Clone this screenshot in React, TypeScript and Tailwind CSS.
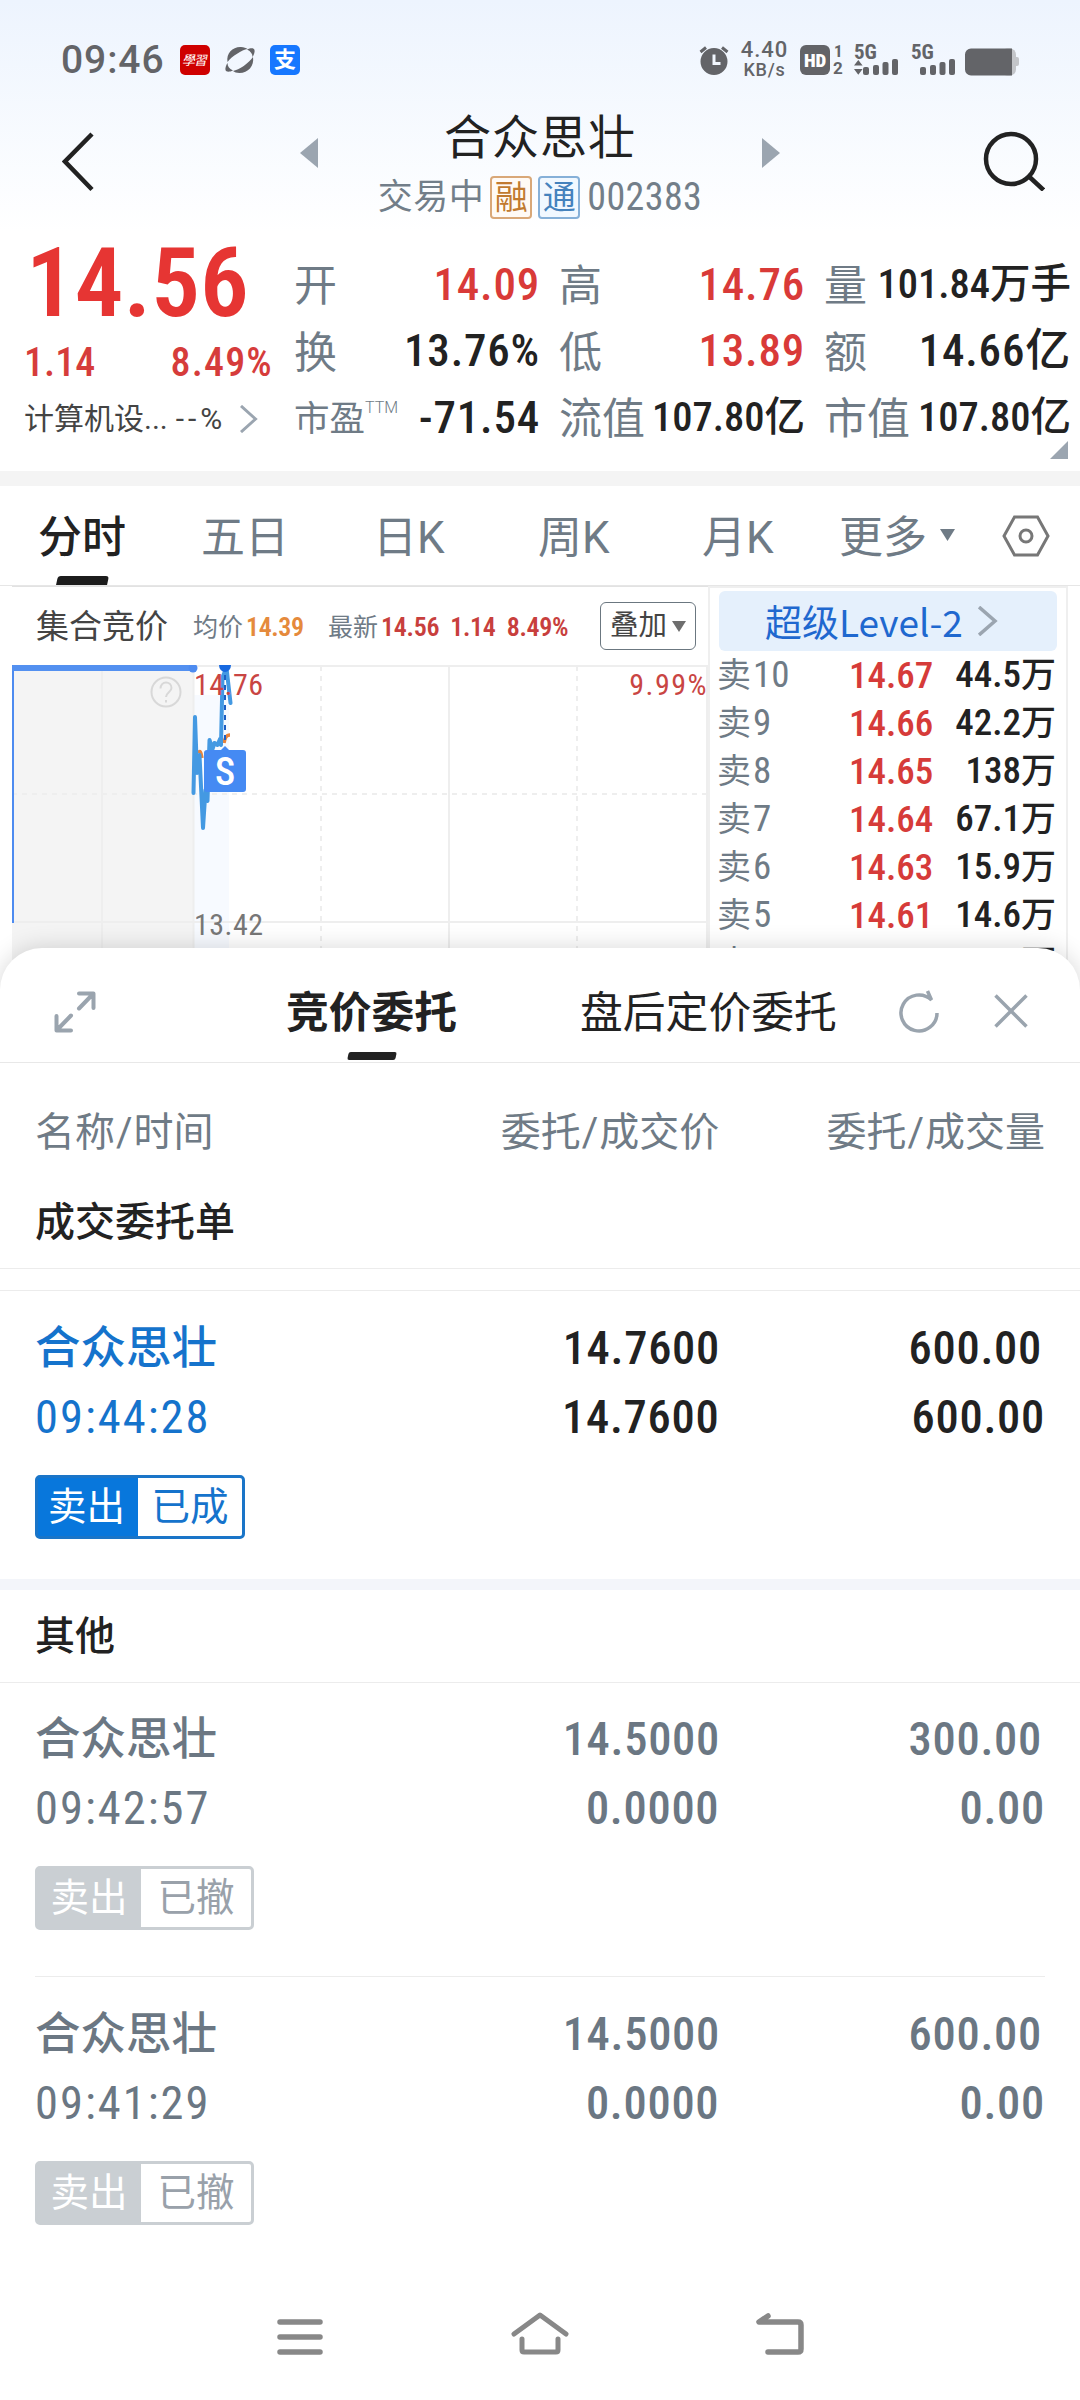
import React from 'react';

interface Quote {
  label: string;
  sup?: string;
  value: string;
  tone: 'up' | 'flat';
  small?: boolean;
}

interface Level {
  name: string;
  price: string;
  volume: string;
}

interface Order {
  name: string;
  time: string;
  price: string;
  dealPrice: string;
  amount: string;
  dealAmount: string;
  status: string;
  done?: boolean;
}

const QUOTE_COLUMNS: Quote[][] = [
  [
    { label: '开', value: '14.09', tone: 'up' },
    { label: '换', value: '13.76%', tone: 'flat' },
    { label: '市盈', sup: 'TTM', value: '-71.54', tone: 'flat' },
  ],
  [
    { label: '高', value: '14.76', tone: 'up' },
    { label: '低', value: '13.89', tone: 'up' },
    { label: '流值', value: '107.80亿', tone: 'flat', small: true },
  ],
  [
    { label: '量', value: '101.84万手', tone: 'flat', small: true },
    { label: '额', value: '14.66亿', tone: 'flat' },
    { label: '市值', value: '107.80亿', tone: 'flat', small: true },
  ],
];

const COLUMN_WIDTHS = ['ml-[19px] w-[246px]', 'ml-[19px] w-[246px]', 'ml-[19px] w-[247px]'];

const LEVELS: Level[] = [
  { name: '卖10', price: '14.67', volume: '44.5万' },
  { name: '卖9', price: '14.66', volume: '42.2万' },
  { name: '卖8', price: '14.65', volume: '138万' },
  { name: '卖7', price: '14.64', volume: '67.1万' },
  { name: '卖6', price: '14.63', volume: '15.9万' },
  { name: '卖5', price: '14.61', volume: '14.6万' },
  { name: '卖4', price: '', volume: '万' },
];

const FILLED: Order = {
  name: '合众思壮',
  time: '09:44:28',
  price: '14.7600',
  dealPrice: '14.7600',
  amount: '600.00',
  dealAmount: '600.00',
  status: '已成',
  done: true,
};

const OTHERS: Order[] = [
  { name: '合众思壮', time: '09:42:57', price: '14.5000', dealPrice: '0.0000', amount: '300.00', dealAmount: '0.00', status: '已撤' },
  { name: '合众思壮', time: '09:41:29', price: '14.5000', dealPrice: '0.0000', amount: '600.00', dealAmount: '0.00', status: '已撤' },
];

const Signal: React.FC<{ active?: boolean }> = ({ active }) => (
  <div className="flex h-[30px] w-[44px] flex-col justify-between">
    <span className="h-[15px] text-[21px] leading-[15px] font-bold">5G</span>
    <svg viewBox="0 0 44 16" className="-mt-px h-4 w-[44px] shrink-0" fill="currentColor">
      {active && <path d="M0 6.500 4.300 1l4.300 5.500zM0 10h8.600L4.300 15.800z" />}
      <rect x="9" y="8" width="6" height="8" rx="2" />
      <rect x="19" y="6" width="6" height="10" rx="2" />
      <rect x="28.500" y="3" width="6" height="13" rx="2" />
      <rect x="38" y="0" width="6" height="16" rx="2" />
    </svg>
  </div>
);

const StatusBar: React.FC = () => (
  <div className="flex h-[120px] items-center pl-[61px] text-[#636468]">
    <span className="w-[119px] text-[39px] leading-none font-medium tracking-[0.900px] font-stretch-100%">09:46</span>
    <div className="flex h-[30px] w-[30px] items-center justify-center rounded-[5px] bg-[#cf0000] text-white">
      <span className="-skew-x-12 text-[13px] leading-none tracking-[-1px]">學習</span>
    </div>
    <svg viewBox="0 0 30 30" className="ml-[15px] h-[30px] w-[30px]" fill="currentColor">
      <path d="M2.500 17C1 8 8 1.500 16 2c3 .2 5 1 6.500 2C17 5 7 11 2.500 17z" />
      <path d="M28 12c1.500 9-5 16-13.500 16-3 0-5-1-6.500-2C14 25 24 18 28 12z" />
      <path d="M22 4.500c4-1.800 7-1.500 7.500.5s-.5 4.500-2 7c0-3-1.500-5.500-5.500-7.500zM8 25.500c-4 1.800-7 1.500-7.500-.5S1 20.500 2.500 18c0 3 1.500 5.500 5.500 7.500z" />
    </svg>
    <div className="ml-[15px] flex h-[30px] w-[30px] items-center justify-center rounded-[5px] bg-[#1677ff] text-[22px] leading-none font-bold text-white">支</div>

    <svg viewBox="0 0 30 30" className="ml-[399px] h-[30px] w-[30px]" fill="currentColor">
      <path d="M15 3a13.500 13.500 0 1 0 0 27 13.500 13.500 0 0 0 0-27zm-1.500 6.500h3v7.500h5v3h-8z" />
      <path d="M1.500 7 7 2.500M28.500 7 23 2.500" stroke="currentColor" strokeWidth="3" />
    </svg>
    <div className="ml-[11px] flex w-[49px] flex-col items-center leading-none font-medium font-stretch-100%">
      <span className="flex h-[20px] items-center text-[22px] leading-[16px] tracking-[1px]">4.40</span>
      <span className="flex h-[20px] items-center text-[18px] leading-[14px] tracking-[0.800px]">KB/s</span>
    </div>
    <div className="ml-[11px] flex h-[30px] w-[30px] items-center justify-center rounded-[6px] bg-[#636468] text-[19px] leading-none font-black text-white">HD</div>
    <div className="ml-[3px] flex h-[30px] w-[11px] flex-col justify-between text-[17px] leading-[13px] font-bold">
      <span className="pl-px">1</span>
      <span className="font-stretch-100%">2</span>
    </div>
    <div className="ml-[10px]"><Signal active /></div>
    <div className="ml-[13px]"><Signal /></div>
    <svg viewBox="0 0 54 28" className="mt-[3px] ml-[10px] h-[28px] w-[54px]">
      <rect x="36" y="0.500" width="15" height="27" rx="6" fill="#c3c5c9" />
      <rect x="49" y="9" width="5" height="9" rx="2" fill="#c3c5c9" />
      <path d="M6 .5h41v27H6a6 6 0 0 1-6-6v-15a6 6 0 0 1 6-6z" fill="#636468" />
    </svg>
  </div>
);

const TitleBar: React.FC = () => (
  <div className="flex h-[112px] items-start">
    <svg viewBox="0 0 32 60" className="mt-[12px] ml-[62px] h-[60px] w-[32px]" fill="none" stroke="#222" strokeWidth="4.500">
      <path d="M30 2 3 29.500 30 57.500" />
    </svg>
    <svg viewBox="0 0 18 30" className="mt-[18px] ml-[206px] h-[30px] w-[18px]" fill="#9ba5b0"><path d="M18 0v30L0 15z" /></svg>
    <div className="flex w-[444px] flex-col items-center">
      <h1 className="mt-[-8px] flex h-[50px] items-center text-[47px] leading-none tracking-[1px] text-[#222]">合众思壮</h1>
      <div className="mt-[14px] flex h-[42px] items-center text-[35px] leading-none text-[#727e89]">
        <span className="tracking-[0.500px]">交易中</span>
        <span className="ml-[6px] flex h-[43px] w-[42px] items-center justify-center rounded-[4px] border-2 border-[#d9a878] bg-[#fffaf5] text-[33px] text-[#c17a30]">融</span>
        <span className="ml-[6px] flex h-[43px] w-[42px] items-center justify-center rounded-[4px] border-2 border-[#86b0d8] bg-[#f1f8ff] text-[33px] text-[#4482bd]">通</span>
        <span className="ml-[7px] text-[38px] tracking-[0.400px]">002383</span>
      </div>
    </div>
    <svg viewBox="0 0 18 30" className="mt-[18px] h-[30px] w-[18px]" fill="#9ba5b0"><path d="M0 0v30l18-15z" /></svg>
    <svg viewBox="0 0 62 60" className="mt-[11px] ml-[203px] h-[60px] w-[62px]" fill="none" stroke="#222" strokeWidth="4.500">
      <circle cx="28" cy="28" r="25" />
      <path d="m46.500 46 14 13" />
    </svg>
  </div>
);

const QuoteBoard: React.FC = () => (
  <div className="relative flex h-[239px]">
    <div className="w-[275px] pl-[24px]">
      <div className="mt-[10px] flex h-[82px] items-center pl-[2px] text-[97px] leading-none font-semibold text-[#e63533]">14.56</div>
      <div className="mt-[18px] flex h-[42px] w-[248px] items-center justify-between text-[40px] leading-none font-medium text-[#d63c3b]">
        <span>1.14</span>
        <span className="-mr-px tracking-[1.200px]">8.49%</span>
      </div>
      <div className="mt-[15px] flex h-[40px] items-center text-[30px] leading-none text-[#444]">
        <span>计算机设</span>
        <span className="font-stretch-100%">...</span>
        <span className="ml-[8px] flex items-center font-stretch-100%">
          <span className="tracking-[4px]">--</span>%
        </span>
        <svg viewBox="0 0 18 28" className="ml-[18px] h-[28px] w-[18px]" fill="none" stroke="#9ba5b0" strokeWidth="3"><path d="m1 1 14.500 13L1 27" /></svg>
      </div>
    </div>
    {QUOTE_COLUMNS.map((column, i) => (
      <div key={i} className={`pt-[19px] ${COLUMN_WIDTHS[i]}`}>
        {column.map((q) => (
          <div key={q.label} className="flex h-[66.500px] items-center justify-between whitespace-nowrap leading-none">
            <span className={`flex pt-[5px] text-[#6f7b86] ${q.sup ? 'text-[35.500px]' : 'text-[43px]'}`}>
              {q.label}
              {q.sup && <sup className="pt-[6px] text-[16px] leading-none font-light font-stretch-100%">{q.sup}</sup>}
            </span>
            <span className={`font-medium ${q.tone === 'up' ? 'text-[#d93a38]' : 'text-[#222]'} ${q.small ? 'text-[40.500px]' : 'text-[45px] tracking-[0.800px]'}`}>
              {q.value}
            </span>
          </div>
        ))}
      </div>
    ))}
    <svg viewBox="0 0 18 18" className="absolute right-[12px] bottom-[12px] h-[18px] w-[18px]" fill="#9ba5b0"><path d="M18 0v18H0z" /></svg>
  </div>
);

const PeriodTabs: React.FC = () => (
  <div className="flex h-[100px] items-start border-b border-[#e6e6e6] text-[44px] leading-none text-[#6f7b86] font-stretch-100%">
    <div className="ml-[38px] flex h-[99px] w-[88px] flex-col items-center">
      <span className="mt-[30px] font-medium text-[#222]">分时</span>
      <span className="mt-auto h-[9px] w-[51px] -skew-x-12 rounded-t-[3px] bg-[#1c1c1c]" />
    </div>
    <span className="mt-[30px] ml-[75px] w-[172px]">五日</span>
    <span className="mt-[30px] w-[165px]">日K</span>
    <span className="mt-[30px] w-[164px]">周K</span>
    <span className="mt-[30px] w-[137px]">月K</span>
    <span className="mt-[30px] w-[88px]">更多</span>
    <svg viewBox="0 0 15 12" className="mt-[43px] ml-[13px] h-[12px] w-[15px]" fill="#6f7b86"><path d="M0 0h15L7.500 12z" /></svg>
    <svg viewBox="0 0 48 42" className="mt-[29px] ml-[47px] h-[42px] w-[48px]" fill="none" stroke="#777" strokeWidth="3">
      <path d="M12.500 2h23L46 21 35.500 40h-23L2 21z" />
      <circle cx="24" cy="21" r="6" />
    </svg>
  </div>
);

const PriceChart: React.FC = () => (
  <svg viewBox="12 665 696 323" className="block h-[323px] w-[696px]" fill="none">
    <rect x="12" y="665" width="181" height="323" fill="#f4f4f4" />
    <rect x="193" y="695" width="36" height="293" fill="#f7faff" />
    <g stroke="#eeeeee" strokeWidth="2">
      <path d="M12 666h696M12 922h696M102 666v322M193.500 666v322M449 666v322M707 666v322" />
      <path d="M12 794h696M321 666v322M577 666v322" strokeDasharray="5 5" />
    </g>
    <path d="M13 665v258" stroke="#4d8bf0" strokeWidth="2" />
    <path d="M12 668h181" stroke="#5390f0" strokeWidth="6" />
    <circle cx="193" cy="668" r="4.500" fill="#4d8bf0" />
    <g stroke="#d8d8d8" strokeWidth="2">
      <circle cx="166" cy="692" r="14.500" />
      <path d="M160.500 688.500c0-3.500 2.500-6 5.500-6s5.500 2.300 5.500 5.500c0 4-5.500 4.500-5.500 9M166 700v2.500" />
    </g>
    <path d="M198 753c2-3 3-1 4 5M224 743c1-5 2-8 6-8" stroke="#e8833a" strokeWidth="3.500" />
    <path
      d="m193.500 793 1.500-76 2 56 2.500-18 3.500 73 2.500-38 2 11 2-61 3 9 2-6 3 2 2.500-6 1 6 1.500-68 4-9 4 35"
      stroke="#4499e2"
      strokeWidth="4"
      strokeLinejoin="round"
      strokeLinecap="round"
    />
    <text x="194" y="695" fontSize="30" letterSpacing="0.500" fill="#c94543">14.76</text>
    <text x="194" y="935" fontSize="30" letterSpacing="0.500" fill="#777">13.42</text>
    <text x="708" y="695" fontSize="30" letterSpacing="1.500" fill="#c94543" textAnchor="end">9.99%</text>
    <path d="M219 665h12a6 7 0 0 1-12 0z" fill="#1769e0" />
    <path d="M225 675v66" stroke="#1c5fc4" strokeWidth="2" strokeDasharray="5 5" />
    <path d="M225 746l4 4h14a3 3 0 0 1 3 3v36a3 3 0 0 1-3 3h-36a3 3 0 0 1-3-3v-36a3 3 0 0 1 3-3h14z" fill="#458af3" />
    <text x="225" y="784.500" fontSize="38" fontWeight="500" fill="#fff" textAnchor="middle" className="font-stretch-75%">S</text>
  </svg>
);

const ChartPanel: React.FC = () => (
  <div className="w-[696px] border-t border-[#e2e2e2]">
    <div className="flex h-[78px] items-center pl-[24px] leading-none">
      <span className="w-[157px] text-[33px] text-[#444]">集合竞价</span>
      <span className="w-[53px] pt-[2px] text-[25px] text-[#6f7b86]">均价</span>
      <span className="w-[82px] pt-[2px] text-[26px] font-semibold tracking-[-0.400px] text-[#e58a3c]">14.39</span>
      <span className="w-[53px] pt-[2px] text-[25px] text-[#6f7b86]">最新</span>
      <span className="flex w-[219px] gap-[11px] pt-[2px] text-[26px] font-semibold tracking-[-0.300px] text-[#c83f3d]">
        <span>14.56</span>
        <span>1.14</span>
        <span>8.49%</span>
      </span>
      <button className="flex h-[48px] w-[96px] items-center justify-center gap-[5px] rounded-[6px] border border-[#6b7780] text-[28.500px] text-[#444]">
        叠加
        <svg viewBox="0 0 14 11" className="h-[11px] w-[14px]" fill="#6e6e6e"><path d="M0 0h14L7 11z" /></svg>
      </button>
    </div>
    <PriceChart />
  </div>
);

const OrderBook: React.FC = () => (
  <div className="w-[360px] border-x-2 border-t-2 border-[#efefef] pl-[9px]">
    <div className="mt-[3px] flex h-[60px] w-[338px] items-center rounded-[6px] bg-[#e5f0fc] pl-[46px] text-[37px] leading-none text-[#1f68cf]">
      <span className="font-['Noto_Sans_CJK_SC'] leading-[56px]">超级Level-2</span>
      <svg viewBox="0 0 20 30" className="ml-[15px] h-[30px] w-[20px]" fill="none" stroke="#9ba5b0" strokeWidth="3.500"><path d="m1 1 16 14L1 29" /></svg>
    </div>
    {LEVELS.map((l) => (
      <div key={l.name} className="-ml-[2px] flex h-[48px] items-center pb-[2px] text-[37px] leading-none">
        <span className="w-[132px] text-[#6f7b86]"><span className="mr-[2px] text-[34px]">卖</span>{l.name.slice(1)}</span>
        <span className="w-[84px] pt-[2px] font-medium text-[#d63b39]">{l.price}</span>
        <span className="w-[123px] text-right font-medium text-[#222]">{l.volume.slice(0, -1)}<span className="text-[35px]">万</span></span>
      </div>
    ))}
  </div>
);

const OrderRow: React.FC<{ order: Order }> = ({ order }) => {
  const main = order.done ? 'text-[#222]' : 'text-[#6b7783]';
  const side = order.done ? 'text-[#1573cc]' : 'text-[#6b7783]';
  return (
    <div className="px-[35px]">
      <div className={`flex h-[70px] items-center pt-[2px] text-[46.500px] leading-none font-medium tracking-[0.700px] ${main}`}>
        <span className={`w-[300px] pt-px text-[45.500px] tracking-normal ${side}`}>{order.name}</span>
        <span className="w-[385px] text-right">{order.price}</span>
        <span className="w-[322px] text-right">{order.amount}</span>
      </div>
      <div className={`flex h-[70px] items-center pt-px text-[46.500px] leading-none font-medium tracking-[0.700px] ${main}`}>
        <span className={`w-[300px] font-normal tracking-[2px] ${side}`}>{order.time}</span>
        <span className="w-[385px] text-right">{order.dealPrice}</span>
        <span className="w-[326px] text-right">{order.dealAmount}</span>
      </div>
      <div
        className={`mt-[23px] flex h-[64px] overflow-hidden rounded-[5px] border-[3px] text-[38.500px] leading-none ${
          order.done ? 'w-[210px] border-[#1a75c8] bg-[#0877dc]' : 'w-[219px] border-[#cacfd3] bg-[#cacfd3]'
        }`}
      >
        <span className={`flex items-center justify-center text-white ${order.done ? 'w-[100px] pr-[3px]' : 'w-[103px] pr-px'}`}>卖出</span>
        <span className={`flex flex-1 items-center justify-center bg-white ${order.done ? 'text-[#1573cc]' : 'text-[#99a1aa]'}`}>{order.status}</span>
      </div>
    </div>
  );
};

const OrderSheet: React.FC = () => (
  <section className="relative -mt-[40px] h-[1334px] rounded-t-[42px] bg-white shadow-[0_0_24px_rgba(0,0,0,0.16)]">
    <div className="flex h-[115px] items-start border-b border-[#e8e8e8] text-[42.800px] leading-none text-[#222]">
      <svg viewBox="0 0 42 42" className="mt-[43px] ml-[54px] h-[42px] w-[42px]" fill="none" stroke="#9aa4ae" strokeWidth="4" strokeLinecap="round" strokeLinejoin="round">
        <path d="M25 2.500h14.500V17M39 3 25 17.500M2.500 25v14.500H17M3 39l14-14.500" />
      </svg>
      <div className="ml-[189px] flex h-[112px] w-[173px] flex-col items-center">
        <span className="mt-[44px] font-bold">竞价委托</span>
        <span className="mt-auto h-[8px] w-[48px] -skew-x-12 rounded-[2px] bg-[#222]" />
      </div>
      <span className="mt-[44px] ml-[122px] w-[258px]">盘后定价委托</span>
      <svg viewBox="0 0 42 44" className="mt-[42px] ml-[61px] h-[44px] w-[42px]" fill="none" stroke="#9aa4ae" strokeWidth="3.500">
        <path d="M38 23A18 18 0 1 1 32.500 10L28.500 1" />
      </svg>
      <svg viewBox="0 0 34 34" className="mt-[46px] ml-[53px] h-[34px] w-[34px]" fill="none" stroke="#9aa4ae" strokeWidth="3.500"><path d="m1.500 1.500 31 31M32.500 1.500l-31 31" /></svg>
    </div>

    <div className="flex h-[138px] items-center px-[35px] pt-px text-[40px] leading-none text-[#6f7b86] font-stretch-100%">
      <span className="w-[300px]">名称<span className="mx-px">/</span>时间</span>
      <span className="w-[385px] text-right">委托<span className="mx-px">/</span>成交价</span>
      <span className="w-[326px] text-right">委托<span className="mx-px">/</span>成交量</span>
    </div>
    <h2 className="flex h-[68px] items-start border-b border-[#ececec] pt-[2px] pl-[35px] text-[40px] leading-none font-medium text-[#222]">成交委托单</h2>
    <div className="mb-[21px] h-[22px] border-b border-[#ececec]" />
    <OrderRow order={FILLED} />
    <div className="mt-[40px] h-[11px] bg-[#f3f5fa]" />
    <h2 className="mb-[20px] flex h-[93px] items-center border-b border-[#ececec] pt-[2px] pl-[35px] text-[40px] leading-none font-medium text-[#222]">其他</h2>
    <OrderRow order={OTHERS[0]} />
    <div className="mx-[35px] mt-[46px] mb-[21px] h-px bg-[#ececec]" />
    <OrderRow order={OTHERS[1]} />
  </section>
);

const SystemNav: React.FC = () => (
  <nav className="relative flex h-[118px] items-start bg-white pt-[29px] text-[#888]">
    <svg viewBox="0 0 46 46" className="ml-[277px] h-[46px] w-[46px]" fill="none" stroke="currentColor" strokeWidth="5.500" strokeLinecap="round">
      <path d="M3 11h40M3 26h40M3 41h40" />
    </svg>
    <svg viewBox="0 0 58 46" className="ml-[188px] h-[46px] w-[58px]" fill="none" stroke="currentColor" strokeWidth="5" strokeLinecap="round" strokeLinejoin="round">
      <path d="M3 23 29 4l26 19M11 28v11q0 2 2 2h32q2 0 2-2V28" />
    </svg>
    <svg viewBox="0 0 50 46" className="ml-[186px] h-[46px] w-[50px]" fill="none" stroke="currentColor" strokeWidth="5.500" strokeLinecap="round">
      <path d="M13 5 4 11h39q3 0 3 3v24q0 3-3 3H13" strokeLinejoin="round" />
    </svg>
  </nav>
);

const App: React.FC = () => {
  return (
    <div className="h-[2400px] w-[1080px] overflow-hidden bg-white font-[Roboto,'Noto_Sans_CJK_SC',sans-serif] font-stretch-75%">
      <div className="h-[988px] overflow-hidden">
        <div className="bg-linear-to-b from-[#edf4fe] to-white">
          <StatusBar />
          <TitleBar />
        </div>
        <QuoteBoard />
        <div className="h-[15px] bg-[#f4f4f4]" />
        <PeriodTabs />
        <div className="flex pl-[12px]">
          <ChartPanel />
          <OrderBook />
        </div>
      </div>
      <OrderSheet />
      <SystemNav />
    </div>
  );
};

export default App;
